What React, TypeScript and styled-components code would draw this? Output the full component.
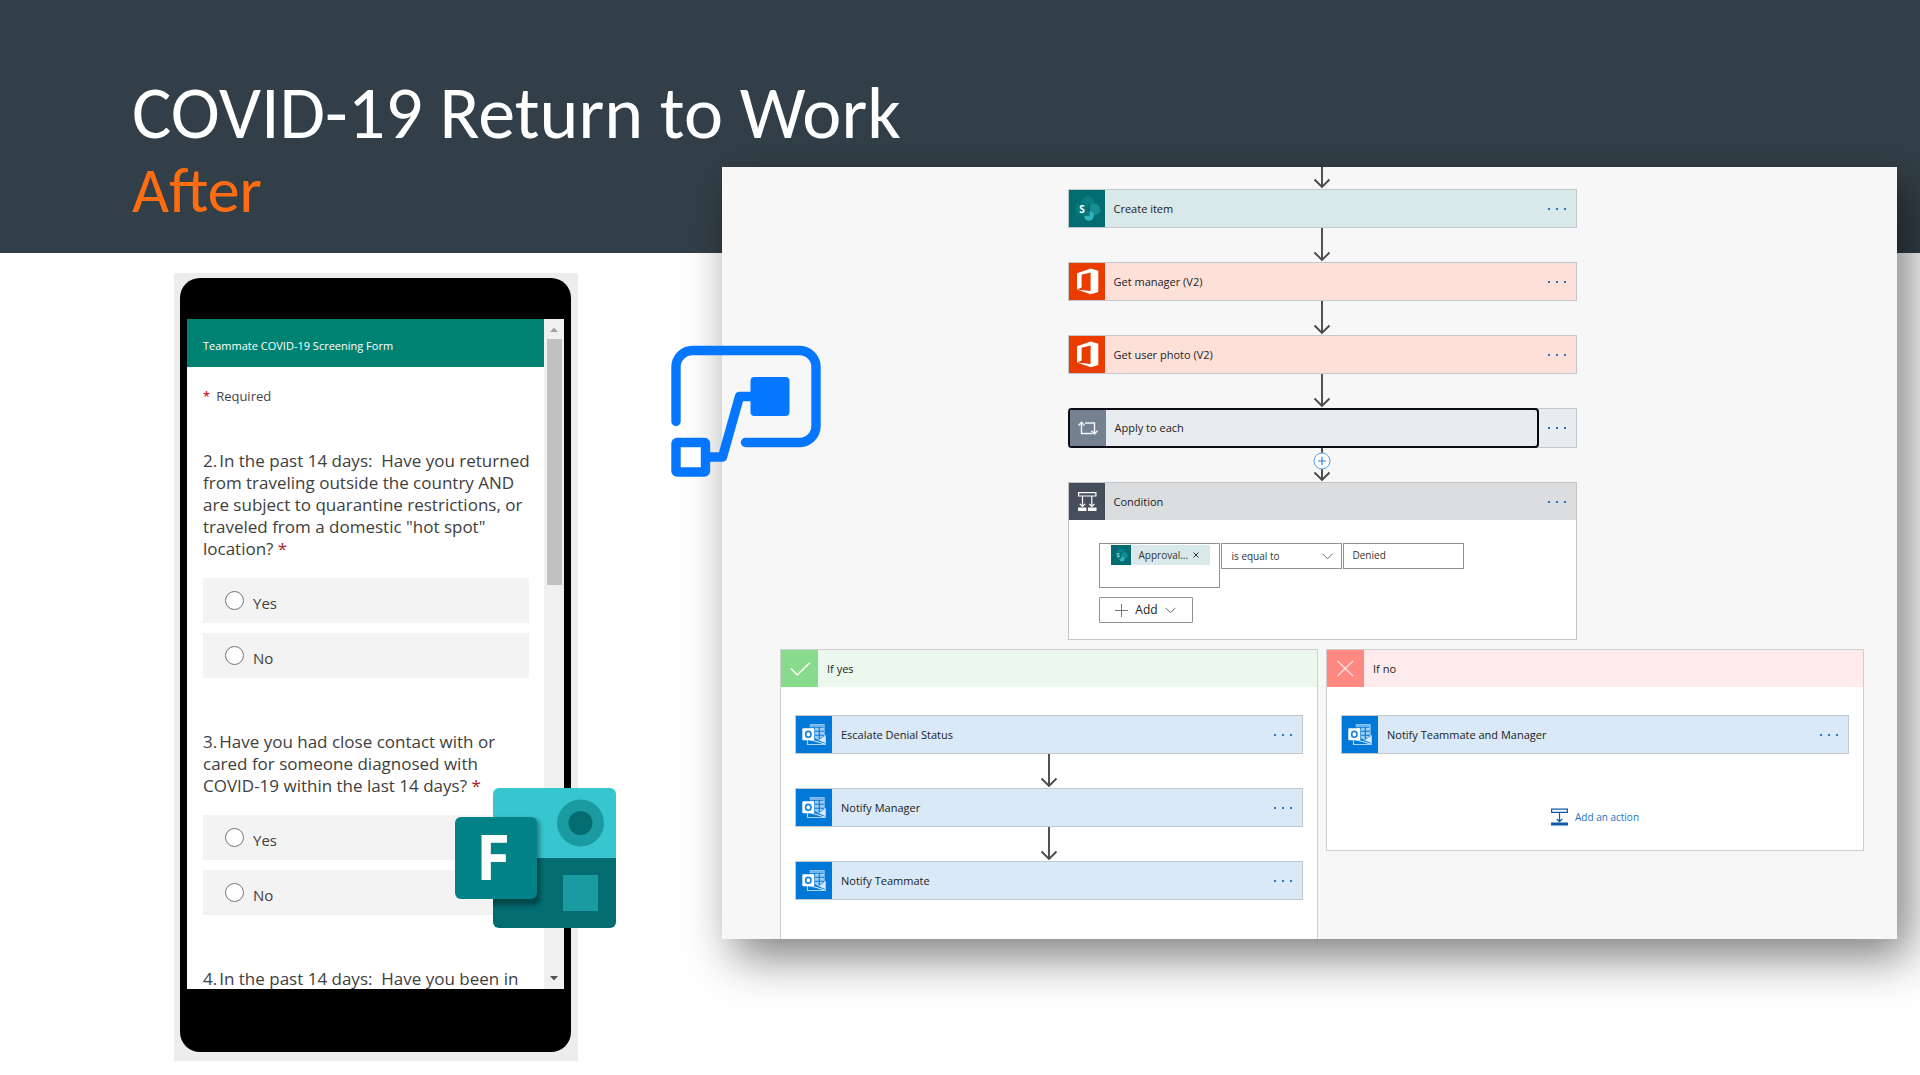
import React from 'react';
import styled, { createGlobalStyle, css } from 'styled-components';

const GlobalStyle = createGlobalStyle`
  *, *::before, *::after { box-sizing: border-box; }
  body { margin: 0; background: #ffffff; }
  button, input, select { font-family: inherit; margin: 0; }
`;

const uiFont = '"Open Sans", "Noto Sans", sans-serif';
const titleFont = 'Carlito, Calibri, Lato, sans-serif';

/* ---------- Slide ---------- */

const Slide = styled.main`
  display: grid;
  grid-template-columns: 722px minmax(0, 1fr);
  align-items: start;
  min-height: 100vh;
  padding-right: 23px;
  overflow: hidden;
  background: linear-gradient(#333f48 0 253px, #ffffff 253px);
  font-family: ${uiFont};
`;

const LeftColumn = styled.section`
  padding-top: 75px;
`;

const Heading = styled.header`
  padding-left: 132px;
  font-family: ${titleFont};
  white-space: nowrap;
`;

const Title = styled.h1`
  margin: 0;
  font-size: 74px;
  font-weight: 400;
  line-height: 76px;
  color: #ffffff;
`;

const Subtitle = styled.p`
  margin: 0;
  font-size: 64px;
  line-height: 78px;
  color: #ff6d10;
`;

/* ---------- Phone ---------- */

const PhoneFrame = styled.div`
  position: relative;
  width: 404px;
  margin: 44px 0 0 174px;
  padding: 5px 7px 9px 6px;
  background: #ededed;
`;

const PhoneBody = styled.div`
  padding: 41px 7px 63px;
  border-radius: 20px;
  background: #000000;
`;

const Screen = styled.div`
  display: grid;
  grid-template-columns: minmax(0, 1fr) 20px;
  height: 670px;
  overflow: hidden;
  background: #ffffff;
`;

const Form = styled.form`
  height: 670px;
  overflow: hidden;
`;

const FormBar = styled.div`
  display: flex;
  align-items: center;
  height: 48px;
  padding: 6px 16px 0;
  background: #008272;
  color: #ffffff;
  font-size: 11px;
  line-height: 16px;
`;

const FormContent = styled.div`
  padding: 19px 15px 0 16px;
`;

const RequiredNote = styled.p`
  display: flex;
  gap: 6px;
  margin: 0 0 44px;
  font-size: 13px;
  line-height: 20px;
  color: #444444;
`;

const RequiredStar = styled.span`
  color: #e81123;
  font-weight: 600;
`;

const Question = styled.fieldset`
  min-width: 0;
  margin: 0 0 53px;
  padding: 0;
  border: 0;
`;

const QuestionText = styled.legend`
  margin: 0 -8px 18px 0;
  padding: 0;
  font-size: 17px;
  line-height: 22px;
  color: #404040;
`;

const Line = styled.span`
  display: block;
  white-space: pre;
`;

const QuestionNumber = styled.span`
  margin-right: 2px;
`;

const Mandatory = styled.span`
  color: #a4262c;
`;

const Options = styled.div`
  display: grid;
  gap: 10px;
`;

const Option = styled.label`
  display: flex;
  align-items: center;
  gap: 9px;
  height: 45px;
  padding-left: 22px;
  background: #f3f3f3;
  font-size: 15px;
  line-height: 20px;
  color: #404040;
`;

const OptionText = styled.span`
  padding-top: 4px;
`;

const Radio = styled.input`
  appearance: none;
  width: 19px;
  height: 19px;
  margin: 0;
  border: 1px solid #767676;
  border-radius: 50%;
  background: #ffffff;
`;

const ScrollTrack = styled.div`
  display: flex;
  flex-direction: column;
  align-items: center;
  background: #f0f0f0;
`;

const ScrollThumb = styled.div`
  width: 15px;
  height: 246px;
  margin-bottom: auto;
  background: #c1c1c1;
`;

const ScrollArrow = styled.svg`
  display: block;
  width: 20px;
  height: 20px;
`;

const FormsBadge = styled.svg`
  position: absolute;
  top: 515px;
  right: -40px;
  width: 164px;
  height: 144px;
`;

/* ---------- Flow panel ---------- */

const FlowPanel = styled.section`
  position: relative;
  display: flex;
  flex-direction: column;
  align-items: center;
  margin-top: 167px;
  padding: 0 33px 0 58px;
  background: #f7f7f7;
  box-shadow: 12px 18px 44px rgba(0, 0, 0, 0.5);
`;

const FlowBadge = styled.svg`
  position: absolute;
  top: 178px;
  left: -52px;
  width: 152px;
  height: 133px;
`;

const Stack = styled.div`
  display: flex;
  flex-direction: column;
  align-items: center;
  width: 509px;
`;

const ArrowSvg = styled.svg`
  display: block;
  flex: none;
`;

const StepCard = styled.div<{ $bg: string; $focused?: boolean }>`
  display: flex;
  width: 100%;
  height: 39px;
  border: 1px solid #c2c8cb;
  background: ${(p) => p.$bg};
  ${(p) =>
    p.$focused &&
    css`
      height: 40px;
      border-left: 0;
    `}
`;

const StepMain = styled.button<{ $focused?: boolean }>`
  display: flex;
  flex: 1;
  align-items: center;
  min-width: 0;
  padding: 0;
  border: 0;
  background: transparent;
  text-align: left;
  ${(p) =>
    p.$focused &&
    css`
      margin: -1px 0;
      border: 2px solid #0b0b10;
      border-radius: 4px;
      overflow: hidden;
    `}
`;

const Tile = styled.span<{ $color: string }>`
  display: flex;
  flex: none;
  align-items: center;
  justify-content: center;
  align-self: stretch;
  width: 36px;
  background: ${(p) => p.$color};
`;

const StepLabel = styled.span`
  padding-left: 9px;
  font-size: 11px;
  line-height: 16px;
  color: #222222;
`;

const MoreButton = styled.button`
  display: flex;
  flex: none;
  align-items: center;
  justify-content: flex-end;
  gap: 6px;
  width: 37px;
  padding: 0 10px 0 0;
  border: 0;
  background: transparent;
`;

const Dot = styled.i`
  width: 2px;
  height: 2px;
  background: #2673c8;
`;

const ConditionCard = styled.div`
  width: 100%;
  border: 1px solid #c4c4c4;
  background: #ffffff;
`;

const CardHeader = styled.div<{ $bg: string }>`
  display: flex;
  height: 37px;
  background: ${(p) => p.$bg};
`;

const ConditionBody = styled.div`
  padding: 23px 30px 16px;
`;

const Fields = styled.div`
  display: grid;
  grid-template-columns: repeat(3, 121px);
  gap: 1px;
  align-items: start;
`;

const fieldBox = css`
  width: 100%;
  border: 1px solid #919191;
  border-radius: 0;
  background: #ffffff;
  color: #333333;
  font-size: 10px;
  line-height: 14px;
`;

const TokenField = styled.div`
  ${fieldBox}
  height: 45px;
  padding: 1px 9px 0 11px;
`;

const Token = styled.div`
  display: flex;
  align-items: center;
  height: 20px;
  background: #d9e8e8;
`;

const TokenIcon = styled.span`
  width: 20px;
  height: 20px;
  margin-right: 8px;
  background: #036c70;
`;

const TokenRemove = styled.button`
  display: flex;
  margin-left: 5px;
  padding: 0;
  border: 0;
  background: transparent;
`;

const SelectWrap = styled.div`
  display: grid;
  align-items: center;
`;

const OperatorSelect = styled.select`
  ${fieldBox}
  grid-area: 1 / 1;
  appearance: none;
  height: 26px;
  padding: 0 24px 0 10px;
`;

const SelectChevron = styled.span`
  display: flex;
  grid-area: 1 / 1;
  justify-self: end;
  margin-right: 9px;
  pointer-events: none;
`;

const ValueInput = styled.input`
  ${fieldBox}
  height: 26px;
  padding: 0 9px 2px;
`;

const AddButton = styled.button`
  display: flex;
  align-items: center;
  justify-content: center;
  gap: 7px;
  width: 94px;
  height: 26px;
  margin-top: 9px;
  padding: 0;
  border: 1px solid #919191;
  border-radius: 1px;
  background: #ffffff;
  color: #222222;
  font-size: 12px;
  font-weight: 500;
  line-height: 16px;
`;

const Branches = styled.div`
  display: grid;
  grid-template-columns: repeat(2, minmax(0, 1fr));
  gap: 8px;
  align-items: start;
  align-self: stretch;
  margin-top: 9px;
`;

const Branch = styled.div<{ $open?: boolean }>`
  border: 1px solid #cfcfcf;
  border-bottom-width: ${(p) => (p.$open ? 0 : 1)}px;
  background: #ffffff;
`;

const BranchTile = styled(Tile)`
  width: 37px;
`;

const BranchBody = styled.div<{ $bottom: number }>`
  display: flex;
  flex-direction: column;
  align-items: center;
  padding: 28px 14px ${(p) => p.$bottom}px;
`;

const AddAction = styled.button`
  display: flex;
  align-items: center;
  gap: 7px;
  margin-top: 54px;
  padding: 0;
  border: 0;
  background: transparent;
  color: #1f6fc9;
  font-size: 10px;
  line-height: 18px;
`;

/* ---------- Icons ---------- */

const SharePointIcon = () => (
  <svg width="36" height="37" viewBox="0 0 36 37" aria-hidden="true">
    <circle cx="19" cy="13.5" r="7" fill="#0a7d80" />
    <circle cx="25.5" cy="19.5" r="5.8" fill="#158f93" />
    <circle cx="20" cy="26" r="4.8" fill="#2fb3bb" />
    <rect x="9" y="14" width="12" height="12" rx="1" fill="#025053" opacity="0.5" />
    <rect x="7" y="13.5" width="12" height="12" rx="1" fill="#03787c" />
    <text x="13" y="23" textAnchor="middle" fontFamily="Open Sans, sans-serif" fontWeight="700" fontSize="10" fill="#ffffff">S</text>
  </svg>
);

const TokenSharePoint = () => (
  <svg width="20" height="20" viewBox="0 0 20 20" aria-hidden="true">
    <circle cx="10" cy="7.5" r="4" fill="#0b8084" />
    <circle cx="13.5" cy="10.5" r="3.2" fill="#15898d" />
    <circle cx="11" cy="14" r="2.6" fill="#2fb3bb" />
    <rect x="4" y="7" width="6.5" height="6.5" fill="#03787c" />
    <path d="M8.400 8.800C7.200 8.100 5.800 8.700 6.200 9.600C6.600 10.400 8.500 10.200 8.400 11.100C8.300 12 6.800 12 6.100 11.500" fill="none" stroke="#cfe8e8" strokeWidth="0.9" />
  </svg>
);

const OfficeIcon = () => (
  <svg width="36" height="37" viewBox="0 0 36 37" aria-hidden="true">
    <path d="M8 10.2 21.8 5.6 29.3 7.8V29L21.8 31.2 8 26.4 21.6 28V9.6L12.6 11.8V24.4L8 26.4Z" fill="#ffffff" />
  </svg>
);

const LoopIcon = () => (
  <svg width="34" height="36" viewBox="0 0 34 36" fill="none" stroke="#f4f6f8" strokeWidth="1.4" aria-hidden="true">
    <path d="M10.500 12.500V23.500H21.500M7.500 15.500 10.500 12.300 13.500 15.500" />
    <path d="M14 13H23.500V23.500M20.500 20.800 23.500 24 26.500 20.800" />
  </svg>
);

const ConditionIcon = () => (
  <svg width="36" height="37" viewBox="0 0 36 37" aria-hidden="true">
    <g fill="none" stroke="#ffffff" strokeWidth="1.2">
      <path d="M9.600 9.600H26.900V13H9.600Z" />
      <path d="M13.500 13V23.500M22.800 13V23.500M10.800 20.900 13.500 23.500 16.200 20.900M20.100 20.900 22.800 23.500 25.500 20.900" />
    </g>
    <path d="M9 24.500H17.400V28.100H9ZM19 24.500H27.500V28.100H19Z" fill="#ffffff" />
  </svg>
);

const OutlookIcon = () => (
  <svg width="36" height="37" viewBox="0 0 36 37" aria-hidden="true">
    <path d="M14 8.500H28V19L29.300 20V28.500H11.500V24" fill="none" stroke="#a9d2f5" strokeWidth="1.2" />
    <path d="M13.500 8.500H28V11H13.500Z" fill="#6fb4ee" />
    <path d="M14 11.800H28V20L22 24 16 20Z" fill="#9fcdf4" />
    <path d="M18.500 11V23M23.300 11V23M17 15.200H28M17 19.200H28" stroke="#0078d7" strokeWidth="1.1" />
    <path d="M12.500 23.500 20.500 25.500 28.500 28" fill="none" stroke="#d6eafb" strokeWidth="1.2" />
    <path d="M22.500 24.300 29.200 19.800V27Z" fill="#d6eafb" />
    <rect x="6.3" y="12.3" width="12" height="12" rx="0.8" fill="#ffffff" />
    <ellipse cx="12.3" cy="18.3" rx="2.7" ry="3" fill="none" stroke="#1d82d8" strokeWidth="1.7" />
  </svg>
);

const Chevron = () => (
  <svg width="11" height="7" viewBox="0 0 11 7" fill="none" stroke="#666666" aria-hidden="true">
    <path d="M0.500 0.800 5.500 5.800 10.500 0.800" />
  </svg>
);

const Arrow = ({ height = 34, insert = false }: { height?: number; insert?: boolean }) => (
  <ArrowSvg width="18" height={height} viewBox={`0 0 18 ${height}`} fill="none" aria-hidden="true">
    <path
      d={`M9 0V${height - 2}M1.500 ${height - 9.5} 9 ${height - 2} 16.500 ${height - 9.5}`}
      stroke="#4a4a4a"
      strokeWidth="1.9"
    />
    {insert && (
      <>
        <circle cx="9" cy="13" r="8" fill="#ffffff" stroke="#5a9fe0" />
        <path d="M9 9V17M5 13H13" stroke="#2b83dc" strokeWidth="1.2" />
      </>
    )}
  </ArrowSvg>
);

/* ---------- Parts ---------- */

const More = ({ of }: { of: string }) => (
  <MoreButton type="button" aria-label={`More options: ${of}`}>
    <Dot />
    <Dot />
    <Dot />
  </MoreButton>
);

type StepProps = { label: string; bg: string; color: string; icon: React.ReactNode; focused?: boolean };

const Step = ({ label, bg, color, icon, focused }: StepProps) => (
  <StepCard $bg={bg} $focused={focused}>
    <StepMain type="button" $focused={focused}>
      <Tile $color={color}>{icon}</Tile>
      <StepLabel>{label}</StepLabel>
    </StepMain>
    <More of={label} />
  </StepCard>
);

const MailStep = ({ label }: { label: string }) => (
  <Step label={label} bg="#d9e9f7" color="#0078d7" icon={<OutlookIcon />} />
);

const questions = [
  {
    number: 2,
    lines: [
      'In the past 14 days:  Have you returned',
      'from traveling outside the country AND',
      'are subject to quarantine restrictions, or',
      'traveled from a domestic "hot spot"',
      'location?',
    ],
  },
  {
    number: 3,
    lines: ['Have you had close contact with or', 'cared for someone diagnosed with', 'COVID-19 within the last 14 days?'],
  },
  { number: 4, lines: ['In the past 14 days:  Have you been in'], cut: true },
];

const Phone = () => (
  <PhoneFrame>
    <PhoneBody>
      <Screen>
        <Form>
          <FormBar>Teammate COVID-19 Screening Form</FormBar>
          <FormContent>
            <RequiredNote>
              <RequiredStar>*</RequiredStar>Required
            </RequiredNote>
            {questions.map((q) => (
              <Question key={q.number}>
                <QuestionText>
                  {q.lines.map((line, i) => (
                    <Line key={line}>
                      {i === 0 && <QuestionNumber>{q.number}.</QuestionNumber>}
                      {line}
                      {!q.cut && i === q.lines.length - 1 && <Mandatory> *</Mandatory>}
                    </Line>
                  ))}
                </QuestionText>
                {!q.cut && (
                  <Options>
                    {['Yes', 'No'].map((answer) => (
                      <Option key={answer}>
                        <Radio type="radio" name={`question-${q.number}`} value={answer} />
                        <OptionText>{answer}</OptionText>
                      </Option>
                    ))}
                  </Options>
                )}
              </Question>
            ))}
          </FormContent>
        </Form>
        <ScrollTrack>
          <ScrollArrow viewBox="0 0 20 20" aria-hidden="true">
            <path d="M6 13 10 8.500 14 13Z" fill="#a3a3a3" />
          </ScrollArrow>
          <ScrollThumb />
          <ScrollArrow viewBox="0 0 20 20" aria-hidden="true">
            <path d="M6 7 10 11.500 14 7Z" fill="#505050" />
          </ScrollArrow>
        </ScrollTrack>
      </Screen>
    </PhoneBody>
    <FormsBadge viewBox="0 0 164 144" aria-label="Microsoft Forms" role="img">
      <defs>
        <clipPath id="sheet">
          <rect x="39" y="0" width="123" height="140" rx="6" />
        </clipPath>
        <filter id="soft" x="-20%" y="-20%" width="140%" height="140%">
          <feGaussianBlur stdDeviation="2" />
        </filter>
      </defs>
      <g clipPath="url(#sheet)">
        <rect x="39" width="123" height="70" fill="#37c6d0" />
        <rect x="39" y="70" width="123" height="70" fill="#036c70" />
        <rect x="4" y="31" width="82" height="86" rx="6" fill="#000000" opacity="0.35" filter="url(#soft)" />
      </g>
      <circle cx="126.5" cy="35" r="23.500" fill="#1a9ba1" />
      <circle cx="126.5" cy="35" r="12" fill="#036c70" />
      <rect x="109" y="87" width="35" height="36" fill="#1a9ba1" />
      <rect x="1" y="29" width="82" height="82" rx="6" fill="#038387" />
      <text x="22" y="92" fontFamily="Open Sans, sans-serif" fontWeight="700" fontSize="62" fill="#ffffff">F</text>
    </FormsBadge>
  </PhoneFrame>
);

const Flow = () => (
  <FlowPanel>
    <Stack>
      <Arrow height={22} />
      <Step label="Create item" bg="#d9e8e8" color="#036c70" icon={<SharePointIcon />} />
      <Arrow />
      <Step label="Get manager (V2)" bg="#fde1d9" color="#eb3c00" icon={<OfficeIcon />} />
      <Arrow />
      <Step label="Get user photo (V2)" bg="#fde1d9" color="#eb3c00" icon={<OfficeIcon />} />
      <Arrow />
      <Step label="Apply to each" bg="#e8ecef" color="#748191" icon={<LoopIcon />} focused />
      <Arrow insert />
      <ConditionCard>
        <CardHeader $bg="#dcdddf">
          <StepMain type="button">
            <Tile $color="#454e5a">
              <ConditionIcon />
            </Tile>
            <StepLabel>Condition</StepLabel>
          </StepMain>
          <More of="Condition" />
        </CardHeader>
        <ConditionBody>
          <Fields>
            <TokenField>
              <Token>
                <TokenIcon>
                  <TokenSharePoint />
                </TokenIcon>
                Approval...
                <TokenRemove type="button" aria-label="Remove Approval">
                  <svg width="6" height="6" viewBox="0 0 6 6" stroke="#333333" aria-hidden="true">
                    <path d="M0.500 0.500 5.500 5.500M5.500 0.500 0.500 5.500" />
                  </svg>
                </TokenRemove>
              </Token>
            </TokenField>
            <SelectWrap>
              <OperatorSelect aria-label="Operator" defaultValue="is equal to">
                <option>is equal to</option>
              </OperatorSelect>
              <SelectChevron>
                <Chevron />
              </SelectChevron>
            </SelectWrap>
            <ValueInput aria-label="Value" defaultValue="Denied" />
          </Fields>
          <AddButton type="button">
            <svg width="13" height="13" viewBox="0 0 13 13" stroke="#777777" aria-hidden="true">
              <path d="M6.500 0V13M0 6.500H13" />
            </svg>
            Add
            <Chevron />
          </AddButton>
        </ConditionBody>
      </ConditionCard>
    </Stack>
    <Branches>
      <Branch $open>
        <CardHeader $bg="#ecf8ee">
          <BranchTile $color="#88da8d">
            <svg width="37" height="37" viewBox="0 0 37 37" fill="none" stroke="#ffffff" strokeWidth="1.5" aria-hidden="true">
              <path d="M10 18.500 16.300 25 29 12.500" />
            </svg>
          </BranchTile>
          <StepMain as="div">
            <StepLabel>If yes</StepLabel>
          </StepMain>
        </CardHeader>
        <BranchBody $bottom={39}>
          <MailStep label="Escalate Denial Status" />
          <Arrow />
          <MailStep label="Notify Manager" />
          <Arrow />
          <MailStep label="Notify Teammate" />
        </BranchBody>
      </Branch>
      <Branch>
        <CardHeader $bg="#ffebeb">
          <BranchTile $color="#ff8883">
            <svg width="37" height="37" viewBox="0 0 37 37" fill="none" stroke="#ffe3e1" strokeWidth="1.3" aria-hidden="true">
              <path d="M10.500 11 26 26M26 11 10.500 26" />
            </svg>
          </BranchTile>
          <StepMain as="div">
            <StepLabel>If no</StepLabel>
          </StepMain>
        </CardHeader>
        <BranchBody $bottom={24}>
          <MailStep label="Notify Teammate and Manager" />
          <AddAction type="button">
            <svg width="17" height="18" viewBox="0 0 17 18" aria-hidden="true">
              <path d="M0.600 1.100H16.400V4.400H0.600ZM8.500 4.400V13.500M5.800 11 8.500 13.700 11.200 11" fill="none" stroke="#0f5aa8" strokeWidth="1.2" />
              <path d="M0 14.500H17V17.500H0Z" fill="#0f5aa8" />
            </svg>
            Add an action
          </AddAction>
        </BranchBody>
      </Branch>
    </Branches>
    <FlowBadge viewBox="0 0 152 133" fill="none" stroke="#0576ff" role="img" aria-label="Microsoft Flow">
      <path d="M6 76.500V22A16.500 16.500 0 0 1 22.500 5.500H130A16.500 16.500 0 0 1 146 22V81A16.500 16.500 0 0 1 130 97.500H75.500" strokeWidth="9.4" strokeLinecap="round" />
      <path d="M40 112H52.500L69.500 51.500H82" strokeWidth="9.4" strokeLinejoin="round" />
      <rect x="6" y="97.5" width="29.5" height="29.5" rx="1" fill="#ffffff" strokeWidth="9.4" strokeLinejoin="round" />
      <rect x="80.5" y="32" width="39" height="39" rx="4" fill="#0576ff" stroke="none" />
    </FlowBadge>
  </FlowPanel>
);

export default function App() {
  return (
    <>
      <GlobalStyle />
      <Slide>
        <LeftColumn>
          <Heading>
            <Title>COVID-19 Return to Work</Title>
            <Subtitle>After</Subtitle>
          </Heading>
          <Phone />
        </LeftColumn>
        <Flow />
      </Slide>
    </>
  );
}
